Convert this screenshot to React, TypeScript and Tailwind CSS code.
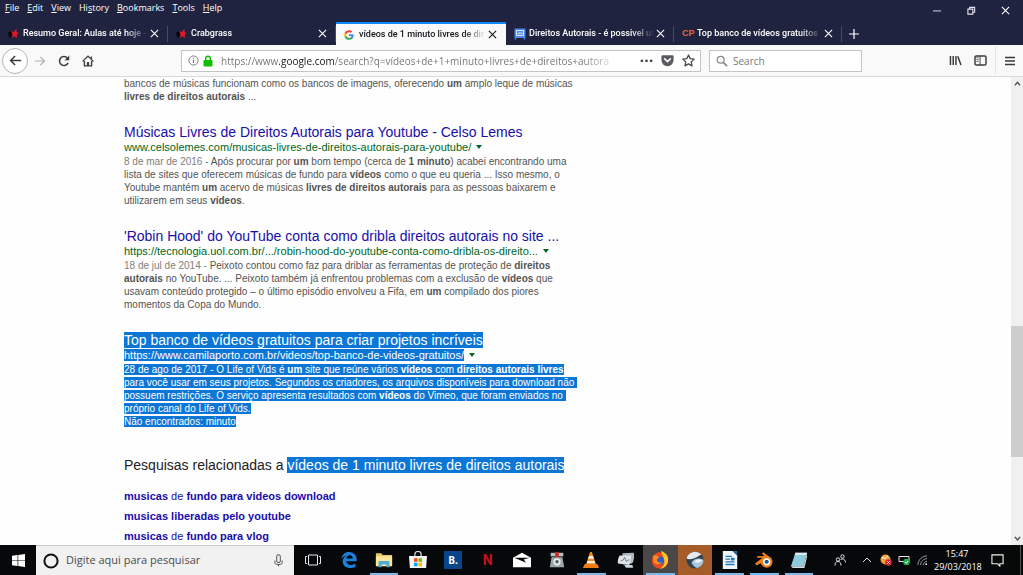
import type { ReactNode } from "react";

// ─── Data ───────────────────────────────────────────────────────────

const MENUS = ["File", "Edit", "View", "History", "Bookmarks", "Tools", "Help"];
// index of the underlined access key of each menu
const ACCESS_KEYS = [0, 0, 0, 2, 0, 0, 0];

const TABS = [
  { title: "Resumo Geral: Aulas até hoje -", icon: "crab", active: false },
  { title: "Crabgrass", icon: "crab", active: false },
  { title: "vídeos de 1 minuto livres de dir", icon: "google", active: true },
  { title: "Direitos Autorais - é possivel ut", icon: "board", active: false },
  { title: "Top banco de vídeos gratuitos", icon: "cp", active: false },
];

// ─── Small icons ────────────────────────────────────────────────────

function CloseIcon() {
  return (
    <svg viewBox="0 0 10 10" className="size-[9px]" fill="none" stroke="currentColor" strokeWidth="1.2">
      <path d="M1 1l8 8M9 1l-8 8" />
    </svg>
  );
}

function TabIcon({ name }: { name: string }) {
  if (name === "google") {
    return (
      <svg viewBox="0 0 24 24" className="size-[10px]">
        <path fill="#4285f4" d="M23 12.3c0-.8-.1-1.6-.2-2.3H12v4.5h6.200c-.3 1.500-1.100 2.700-2.300 3.500v3h3.700c2.200-2 3.400-5 3.400-8.700z" />
        <path fill="#34a853" d="M12 23.500c3.100 0 5.700-1 7.600-2.800l-3.700-2.900c-1 .7-2.300 1.100-3.900 1.100-3 0-5.500-2-6.400-4.700H1.800v3C3.700 21 7.500 23.500 12 23.500z" />
        <path fill="#fbbc05" d="M5.600 14.200c-.5-1.400-.5-3 0-4.400v-3H1.800c-1.600 3.200-1.600 7.100 0 10.300l3.800-2.900z" />
        <path fill="#ea4335" d="M12 5.100c1.700 0 3.200.6 4.400 1.700l3.300-3.300C17.700 1.600 15.100.5 12 .5 7.500.5 3.700 3 1.800 6.800l3.800 3C6.500 7.100 9 5.100 12 5.100z" />
      </svg>
    );
  }
  if (name === "board") {
    return (
      <svg viewBox="0 0 12 12" className="size-[12px]">
        <rect x=".5" y=".5" width="11" height="9.500" rx="1" fill="#4d8af0" />
        <path d="M1.500 10v1.500M10.500 10v1.500" stroke="#4d8af0" strokeWidth="1.400" />
        <path d="M2.500 2.500h7v5h-7z" fill="none" stroke="#dbe8ff" />
        <path d="M4 6l1.200-1.200 1 .8 1-1L8.500 6" stroke="#fff" fill="none" />
      </svg>
    );
  }
  if (name === "cp") {
    return <span className="font-['Liberation_Sans'] text-[9px] font-bold text-[#e2673a]">CP</span>;
  }
  return (
    <svg viewBox="0 0 12 12" className="size-[11px]">
      <path d="M0 5l4-2 1 3-2 5-2-2z" fill="#08080c" />
      <path d="M3.500 3l3 1.500L9 .5l.5 4 2 1-2 2 .5 3.500-3-2-2.500 1.500.5-3.500z" fill="#e0182a" />
    </svg>
  );
}

// ─── Title bar and tabs ─────────────────────────────────────────────

function TitleBar() {
  return (
    <div className="flex h-[22px] items-start justify-between pl-[5px] pr-[13px] text-white">
      <nav className="flex gap-2 text-[9px] leading-[15px]">
        {MENUS.map((menu, i) => (
          <button key={menu}>
            {menu.slice(0, ACCESS_KEYS[i])}
            <u>{menu[ACCESS_KEYS[i]]}</u>
            {menu.slice(ACCESS_KEYS[i] + 1)}
          </button>
        ))}
      </nav>
      <div className="flex h-[21px] items-center gap-[25px]">
        <button aria-label="Minimize">
          <svg viewBox="0 0 10 10" className="size-[9px]" stroke="#e4e4ee">
            <path d="M0 5.500h9" />
          </svg>
        </button>
        <button aria-label="Restore">
          <svg viewBox="0 0 10 10" className="size-[9px]" fill="none" stroke="#e4e4ee" strokeWidth="1.200">
            <path d="M1 3.500h5.500V9H1zM3 3.500V1.500h5.500V7h-2" />
          </svg>
        </button>
        <button aria-label="Close">
          <CloseIcon />
        </button>
      </div>
    </div>
  );
}

function TabStrip() {
  return (
    <div className="flex h-[23px] font-['Roboto','Open_Sans',sans-serif] text-[9px]">
      {TABS.map((tab) => (
        <div
          key={tab.title}
          className={
            tab.active
              ? "flex w-[170px] items-center border-t-2 border-[#0a84ff] bg-[#f9f9fa] pl-2 pr-[9px] text-[#15151a]"
              : "relative flex w-[168px] items-center pl-2 pr-[9px] text-white after:absolute after:right-0 after:h-4 after:w-px after:bg-[#4a4a68]"
          }
        >
          <span className="flex w-[15px] shrink-0 items-center">
            <TabIcon name={tab.icon} />
          </span>
          <span className="min-w-0 flex-1 overflow-hidden whitespace-nowrap font-medium [mask-image:linear-gradient(to_right,#000_82%,transparent)]">
            {tab.title}
          </span>
          <button aria-label="Close tab" className="ml-[2px]">
            <CloseIcon />
          </button>
        </div>
      ))}
      <button aria-label="New tab" className="px-[6px] text-white">
        <svg viewBox="0 0 12 12" className="size-[12px]" stroke="currentColor" strokeWidth="1.200">
          <path d="M6 1v10M1 6h10" />
        </svg>
      </button>
    </div>
  );
}

// ─── Toolbar ────────────────────────────────────────────────────────

function NavToolbar() {
  return (
    <div className="flex h-[32px] items-center border-b border-[#d9d9db] bg-[#f9f9fa] pl-[2px] pr-2 text-[#3b3b3e]">
      <button aria-label="Back" className="flex size-[26px] items-center justify-center rounded-full border border-[#b5b5b8] bg-white">
        <svg viewBox="0 0 16 16" className="size-[13px]" fill="none" stroke="currentColor" strokeWidth="1.800">
          <path d="M15 8H2M7.500 2.500L2 8l5.500 5.500" />
        </svg>
      </button>
      <button aria-label="Forward" className="ml-[6px] text-[#b1b1b3]">
        <svg viewBox="0 0 16 16" className="size-[12px]" fill="none" stroke="currentColor" strokeWidth="1.600">
          <path d="M1 8h13M8.500 2.500L14 8l-5.500 5.500" />
        </svg>
      </button>
      <button aria-label="Reload" className="ml-3">
        <svg viewBox="0 0 16 16" className="size-[12px]" fill="none" stroke="currentColor" strokeWidth="2">
          <path d="M13.500 10.500A6 6 0 1 1 12.500 4" />
          <path d="M15 .8v6.200H8.800z" fill="currentColor" stroke="none" />
        </svg>
      </button>
      <button aria-label="Home" className="ml-3">
        <svg viewBox="0 0 16 16" className="size-[12px]" fill="none" stroke="currentColor" strokeWidth="1.800">
          <path d="M.8 8.500L8 1.500l7.200 7M3.200 8v6.500h9.600V8M12.500 2v3" />
          <path d="M6.500 14.500v-5h3v5" fill="currentColor" stroke="none" />
        </svg>
      </button>

      <div className="ml-[87px] flex h-[22px] min-w-0 flex-1 items-center border border-[#c4c4c6] bg-white pl-[6px] pr-[5px]">
        <svg viewBox="0 0 12 12" className="size-[11px] shrink-0" fill="none" stroke="#737376">
          <circle cx="6" cy="6" r="5" />
          <path d="M6 5.200v3.500M6 3v1.200" strokeWidth="1.200" />
        </svg>
        <svg viewBox="0 0 10 12" className="ml-1 h-[12px] w-[10px] shrink-0">
          <rect x=".5" y="5" width="9" height="6.500" rx="1" fill="#12bc00" />
          <path d="M2.700 5.500V3.500a2.300 2.300 0 0 1 4.600 0v2" fill="none" stroke="#12bc00" strokeWidth="1.500" />
        </svg>
        <input
          aria-label="Address"
          defaultValue="https://www.google.com/search?q=vídeos+de+1+minuto+livres+de+direitos+autora"
          className="ml-2 min-w-0 flex-1 bg-clip-text bg-[linear-gradient(to_right,#707074_58px,#15151a_58px,#15151a_113px,#707074_113px,#707074_360px,transparent_400px)] text-[10px] leading-[16px] text-transparent outline-none"
        />
        <button aria-label="Page actions" className="ml-6">
          <svg viewBox="0 0 14 4" className="w-[13px]" fill="#4a4a4f">
            <circle cx="2" cy="2" r="1.500" />
            <circle cx="7" cy="2" r="1.500" />
            <circle cx="12" cy="2" r="1.500" />
          </svg>
        </button>
        <button aria-label="Save to Pocket" className="ml-2">
          <svg viewBox="0 0 16 16" className="size-[13px]">
            <path d="M2 1.500h12A1.500 1.500 0 0 1 15.500 3v4.500a7.500 7.500 0 0 1-15 0V3A1.500 1.500 0 0 1 2 1.500z" fill="#5b5b60" />
            <path d="M4.500 6L8 9.400 11.500 6" fill="none" stroke="#fff" strokeWidth="1.900" strokeLinecap="round" />
          </svg>
        </button>
        <button aria-label="Bookmark" className="ml-2">
          <svg viewBox="0 0 16 16" className="size-[13px]" fill="none" stroke="#4a4a4f" strokeWidth="1.600" strokeLinejoin="round">
            <path d="M8 1.200l2.100 4.500 4.900.6-3.600 3.400.9 4.900L8 12.200l-4.300 2.400.9-4.900L1 6.300l4.900-.6z" />
          </svg>
        </button>
      </div>

      <div className="ml-2 flex h-[22px] w-[153px] items-center border border-[#c4c4c6] bg-white pl-[6px]">
        <svg viewBox="0 0 14 14" className="size-[12px] shrink-0" fill="none" stroke="#8a8a8d" strokeWidth="1.500">
          <circle cx="5.500" cy="5.500" r="4" />
          <path d="M8.500 8.500l4.500 4.500" strokeWidth="2" />
        </svg>
        <input aria-label="Search" placeholder="Search" className="ml-[5px] min-w-0 flex-1 text-[10px] leading-[16px] outline-none placeholder:text-[#78787b]" />
      </div>

      <button aria-label="Library" className="ml-[87px]">
        <svg viewBox="0 0 14 12" className="h-[11px] w-[13px]" fill="none" stroke="currentColor" strokeWidth="1.600">
          <path d="M1.500 1v10M4.500 1v10M7.500 1v10M9.500 1.500l3.500 9.500" />
        </svg>
      </button>
      <button aria-label="Sidebars" className="ml-3">
        <svg viewBox="0 0 14 12" className="h-[11px] w-[13px]" fill="none" stroke="currentColor" strokeWidth="1.600">
          <rect x="1" y="1" width="12" height="10" rx="1.500" />
          <path d="M6.500 1v10" strokeWidth="1" />
          <path d="M2.500 3h2.500M2.500 5h2.500M2.500 7h2.500" strokeWidth=".8" />
        </svg>
      </button>
      <span className="ml-2 h-[29px] w-px bg-[#e4e4e6]" />
      <button aria-label="Open menu" className="ml-[9px]">
        <svg viewBox="0 0 10 10" className="size-[10px]" stroke="currentColor" strokeWidth="1.400">
          <path d="M0 1.500h10M0 5h10M0 8.500h10" />
        </svg>
      </button>
    </div>
  );
}

// ─── Search results ─────────────────────────────────────────────────

function Sel({ children }: { children: ReactNode }) {
  return <span className="bg-[#0b76d6] text-white">{children}</span>;
}

type ResultProps = { title: ReactNode; url: ReactNode; children: ReactNode };

function Result({ title, url, children }: ResultProps) {
  return (
    <article>
      <h3 className="text-[14px] leading-[16px]">
        <a href="#" className="text-[#1a0dab]">{title}</a>
      </h3>
      <div className="flex items-center gap-[5px] text-[11px] leading-[14px] text-[#006621]">
        <cite className="not-italic">{url}</cite>
        <svg viewBox="0 0 6 4" className="h-1 w-[6px]" fill="#006621">
          <path d="M0 0h6L3 4z" />
        </svg>
      </div>
      <p className="mt-px text-[10px] leading-[13px]">{children}</p>
    </article>
  );
}

function Results() {
  return (
    <main className="flex min-w-0 flex-1 flex-col overflow-hidden whitespace-pre pl-[124px] font-['Liberation_Sans',Arial,sans-serif] text-[#545454]">
      <div className="flex flex-col gap-[21px]">
        <p className="text-[10px] leading-[13px]">
          bancos de músicas funcionam como os bancos de imagens, oferecendo <b>um</b> amplo leque de músicas<br />
          <b>livres de direitos autorais</b> ...
        </p>
        <Result
          title="Músicas Livres de Direitos Autorais para Youtube - Celso Lemes"
          url="www.celsolemes.com/musicas-livres-de-direitos-autorais-para-youtube/"
        >
          <span className="text-[#808080]">8 de mar de 2016 - </span>
          Após procurar por <b>um</b> bom tempo (cerca de <b>1 minuto</b>) acabei encontrando uma<br />
          lista de sites que oferecem músicas de fundo para <b>vídeos</b> como o que eu queria ... Isso mesmo, o<br />
          Youtube mantém <b>um</b> acervo de músicas <b>livres de direitos autorais</b> para as pessoas baixarem e<br />
          utilizarem em seus <b>vídeos</b>.
        </Result>
        <Result
          title="'Robin Hood' do YouTube conta como dribla direitos autorais no site ..."
          url="https://tecnologia.uol.com.br/.../robin-hood-do-youtube-conta-como-dribla-os-direito..."
        >
          <span className="text-[#808080]">18 de jul de 2014 - </span>
          Peixoto contou como faz para driblar as ferramentas de proteção de <b>direitos</b><br />
          <b>autorais</b> no YouTube. ... Peixoto também já enfrentou problemas com a exclusão de <b>vídeos</b> que<br />
          usavam conteúdo protegido – o último episódio envolveu a Fifa, em <b>um</b> compilado dos piores<br />
          momentos da Copa do Mundo.
        </Result>
        <Result
          title={<Sel>Top banco de vídeos gratuitos para criar projetos incríveis</Sel>}
          url={<Sel>https://www.camilaporto.com.br/videos/top-banco-de-videos-gratuitos/</Sel>}
        >
          <Sel>
            28 de ago de 2017 - O Life of Vids é <b>um</b> site que reúne vários <b>vídeos</b> com <b>direitos autorais livres</b><br />
            para você usar em seus projetos. Segundos os criadores, os arquivos disponíveis para download não{" "}<br />
            possuem restrições. O serviço apresenta resultados com <b>vídeos</b> do Vimeo, que foram enviados no{" "}<br />
            próprio canal do Life of Vids.<br />
            Não encontrados: minuto
          </Sel>
        </Result>
      </div>

      <h2 className="mt-[29px] text-[14px] leading-[16px] text-[#222]">
        Pesquisas relacionadas a <Sel>vídeos de 1 minuto livres de direitos autorais</Sel>
      </h2>
      <ul className="mt-[13px] text-[11px] leading-[20px] text-[#1a0dab]">
        <li><a href="#"><b>musicas</b> de <b>fundo para videos download</b></a></li>
        <li><a href="#"><b>musicas liberadas pelo youtube</b></a></li>
        <li><a href="#"><b>musicas</b> de <b>fundo para vlog</b></a></li>
      </ul>
    </main>
  );
}

function Scrollbar() {
  return (
    <div className="flex w-[12px] shrink-0 flex-col items-center bg-[#f0f0f0]">
      <svg viewBox="0 0 8 6" className="my-1 w-[7px]" fill="none" stroke="#505050" strokeWidth="1.600">
        <path d="M1 5l3-3.500L7 5" />
      </svg>
      <div className="grow-[236]" />
      <div className="w-full grow-[131] bg-[#cdcdcd]" />
      <div className="grow-[75]" />
      <svg viewBox="0 0 8 6" className="my-1 w-[7px]" fill="none" stroke="#505050" strokeWidth="1.600">
        <path d="M1 1l3 3.500L7 1" />
      </svg>
    </div>
  );
}

// ─── Taskbar ────────────────────────────────────────────────────────

type App = { name: string; running?: boolean; bg?: string; art: ReactNode };

const APPS: App[] = [
  {
    name: "Edge",
    art: <path d="M1.500 9C2 4 5.500 1 10 1c5 0 8.500 3.500 8.500 8v2.500H7c.3 2.700 2.500 4 5 4 2 0 3.800-.6 5.200-1.500v3.800C15.500 18.700 13.500 19 11.500 19 6.500 19 3 16 3 11.500c0-3 1.800-5.300 4.500-6.500C4.500 5.300 2.500 7 1.500 9zm5.700-.8h6.900c0-2-1.200-3.400-3.300-3.400S7.500 6.300 7.200 8.200z" fill="#1c7fdc" />,
  },
  {
    name: "File Explorer",
    running: true,
    art: (
      <>
        <path d="M1 2.500h6l1.500 2H19v12H1z" fill="#e9c865" />
        <path d="M1 6h18v11H1z" fill="#fae69b" />
        <path d="M4 11h12v7h-3v-3H7v3H4z" fill="#4aa9d9" />
      </>
    ),
  },
  {
    name: "Store",
    art: (
      <>
        <path d="M6.500 6V3.500a3.500 3 0 0 1 7 0V6" fill="none" stroke="#d8d8d8" strokeWidth="1.400" />
        <path d="M0 5.500h20L19 19H1z" fill="#f6f6f6" />
        <path d="M5.500 8h4v4h-4z" fill="#f25022" />
        <path d="M10.500 8h4v4h-4z" fill="#7fba00" />
        <path d="M5.500 13h4v4h-4z" fill="#00a4ef" />
        <path d="M10.500 13h4v4h-4z" fill="#ffb900" />
      </>
    ),
  },
  { name: "Booking", art: null },
  { name: "Netflix", art: null },
  {
    name: "Mail",
    art: (
      <>
        <path d="M0 7.500L10 2l10 5.500V18H0z" fill="#fff" />
        <path d="M1.500 7.500h17L12 9.500l2.500 3.500z" fill="#0b0b0b" />
      </>
    ),
  },
  {
    name: "Recorder",
    art: (
      <>
        <path d="M3 2h14v4H3z" fill="#b9bec2" />
        <path d="M8 1h4v7H8z" fill="#c22a2a" />
        <path d="M4 7h12l2 11H2z" fill="#9fa8a6" />
        <circle cx="10" cy="12" r="4" fill="#e8eceb" />
        <circle cx="10" cy="12" r="2" fill="#50605c" />
      </>
    ),
  },
  {
    name: "VLC",
    running: true,
    art: (
      <>
        <path d="M9 1h2l4.500 14h-11z" fill="#f58a1f" />
        <path d="M7.700 5.500h4.600l1 3H6.700zM6 11h8l.8 2.500H5.200z" fill="#f3eee8" />
        <path d="M3 14.500h14l2 4.500H1z" fill="#ef7d14" />
      </>
    ),
  },
  {
    name: "Monitor",
    art: (
      <>
        <path d="M6 2.500l12.500-.5c1 3 .5 10-2 12L7 15z" fill="#aeb8bf" />
        <path d="M3 5h12.500c.5 4-.5 8-2 10.500L1 14c-.5-3 .5-7 2-9z" fill="#dfe5e8" />
        <path d="M4 11l3-1 1.500-3 2 5 1.500-2h2" fill="none" stroke="#5a7d94" />
        <path d="M8 15.500h9l1 3h-8z" fill="#cfd6da" />
      </>
    ),
  },
  {
    name: "Firefox",
    running: true,
    bg: "bg-[#4b4748]",
    art: (
      <>
        <circle cx="10" cy="10.500" r="9" fill="#f0481f" />
        <path d="M11 0c5 1.500 9 5.500 8 11S14 19.500 10 19.500c4-2 6-6 4.500-10C14 6 12 4 11 0z" fill="#ffc62b" />
        <circle cx="10" cy="10.500" r="4.500" fill="#2c5fc4" />
        <path d="M2 5.500c3-1.500 6-.5 7 2L6.500 9.500c0 3 3 4 5.500 3-1.500 3-6.500 3.500-9 0z" fill="#ff8a1c" />
      </>
    ),
  },
  {
    name: "Media",
    bg: "bg-[#a65c28]",
    art: (
      <>
        <circle cx="10" cy="10" r="9.500" fill="#33424f" />
        <path d="M1 7C3 1 12-2 17 4c-3 1-6 6-16 5z" fill="#e3e9ee" />
        <path d="M6 13c3-5 9-6 13.500-3 0 5-4 8-7 9-3-1-5-3-6.500-6z" fill="#a9c6dc" />
        <path d="M9 12c3-3 6-3 9-2-2 3-5 4-9 2z" fill="#eef4f8" />
      </>
    ),
  },
  {
    name: "Writer",
    running: true,
    art: (
      <>
        <path d="M2 0h11l5 5v15H2z" fill="#eef5fa" />
        <path d="M13 0h5v5z" fill="#1d6fa5" />
        <path d="M5 6h7M5 9h5M5 12h10M5 15h10" stroke="#1f78b4" strokeWidth="1.400" />
        <path d="M11 7.500h4v3h-4z" fill="#1f78b4" />
      </>
    ),
  },
  {
    name: "Blender",
    running: true,
    art: (
      <>
        <path d="M0 14L8.500 7.500H2.500V5.500h8L7.500 3 9.500 1.500l9 7-6 9-6.500-4-4 2.500z" fill="#ee7e1a" />
        <circle cx="13" cy="12" r="6.500" fill="#ee7e1a" />
        <circle cx="13" cy="12" r="4" fill="#fff" />
        <circle cx="13" cy="12" r="2.300" fill="#20558a" />
      </>
    ),
  },
  {
    name: "Notepad",
    running: true,
    art: (
      <>
        <path d="M6 2h13l-4 15H1z" fill="#8ecbdc" />
        <path d="M6 2h13l-.6 2.500H5.200z" fill="#dfe9ec" />
        <path d="M1 17h14l3.500-13 .5 2-3 13H3z" fill="#d9dedf" />
      </>
    ),
  },
];

function AppIcon({ app }: { app: App }) {
  if (app.name === "Booking") {
    return <span className="flex size-[18px] items-center justify-center bg-[#07458a] text-[10px] font-bold text-white">B.</span>;
  }
  if (app.name === "Netflix") {
    return <span className="font-['Roboto'] text-[14px] font-bold text-[#c8101a]">N</span>;
  }
  return <svg viewBox="0 0 20 20" className="size-[18px]">{app.art}</svg>;
}

function Taskbar() {
  return (
    <footer className="flex h-[30px] shrink-0 items-stretch bg-[#070809] text-white">
      <button aria-label="Start" className="flex w-[36px] items-center justify-center">
        <svg viewBox="0 0 14 14" className="size-[13px]" fill="#fff">
          <path d="M0 2l6-.9v5.500H0zM6.700 1L14 0v6.600H6.700zM0 7.300h6v5.500L0 12zM6.700 7.300H14V14l-7.300-1z" />
        </svg>
      </button>
      <label className="flex w-[258px] items-center border-t border-[#c9c9c9] bg-[#f1f1f1] pl-[7px] pr-[11px]">
        <svg viewBox="0 0 16 16" className="size-[16px] shrink-0" fill="none" stroke="#111" strokeWidth="2">
          <circle cx="8" cy="8" r="6.600" />
        </svg>
        <input
          aria-label="Digite aqui para pesquisar"
          placeholder="Digite aqui para pesquisar"
          className="ml-[7px] min-w-0 flex-1 text-[11px] outline-none placeholder:text-[#4c4c4c]"
        />
        <svg viewBox="0 0 10 14" className="h-[13px] w-[9px] shrink-0" fill="none" stroke="#444">
          <rect x="3" y=".7" width="4" height="8.500" rx="1.500" />
          <path d="M1 7v2.500c0 1 .8 1.800 2 1.800h4c1.200 0 2-.8 2-1.800V7M5 11.500V13.500" />
        </svg>
      </label>
      <button aria-label="Task view" className="flex w-[38px] items-center justify-center">
        <svg viewBox="0 0 16 12" className="h-[12px] w-[16px]" fill="none" stroke="#e8e8e8">
          <path d="M3.500 1h9v10h-9zM2 2.500H.5v7H2M14 2.500h1.500v7H14" />
        </svg>
      </button>
      <div className="flex w-[484px]">
        {APPS.map((app) => (
          <button
            key={app.name}
            aria-label={app.name}
            className={`relative flex flex-1 items-center justify-center ${app.bg ?? ""}`}
          >
            <AppIcon app={app} />
            {app.running && <span className="absolute inset-x-[3px] bottom-0 h-[2px] bg-[#76b9ed]" />}
          </button>
        ))}
      </div>
      <div className="ml-auto flex items-center">
        <svg viewBox="0 0 12 12" className="size-[12px]" fill="none" stroke="#e8e8e8">
          <circle cx="8.500" cy="2.500" r="1.700" />
          <circle cx="4" cy="5.500" r="1.700" />
          <path d="M1 11.500c0-2.500 1-4 3-4s3 1.500 3 4M6.500 6c1-1.600 4.800-1.600 5 2.500" />
        </svg>
        <svg viewBox="0 0 10 6" className="ml-4 w-[10px]" fill="none" stroke="#e8e8e8">
          <path d="M1 5l4-4 4 4" />
        </svg>
        <svg viewBox="0 0 12 12" className="ml-2 size-[12px]">
          <circle cx="5.500" cy="5.500" r="5" fill="#f0a03c" />
          <path d="M2 3.500l3 1 3-2.500" stroke="#fff" fill="none" />
          <circle cx="8.500" cy="8.500" r="3.300" fill="#d8262c" />
          <path d="M7.300 7.300l2.400 2.400M9.700 7.300L7.300 9.700" stroke="#fff" />
        </svg>
        <svg viewBox="0 0 13 12" className="ml-[6px] h-[12px] w-[13px]">
          <path d="M1 2.500h10v5H1z" fill="none" stroke="#e8e8e8" />
          <circle cx="8.500" cy="8" r="3.300" fill="#1fae4b" />
          <path d="M7 8l1.200 1.200L10 7" stroke="#fff" fill="none" />
        </svg>
        <svg viewBox="0 0 12 12" className="ml-[6px] size-[11px]" fill="none" stroke="#a8a8a8">
          <path d="M1 11C1 5.500 5.500 1 11 1M4 11c0-4 3-7 7-7M7 11c0-2.300 1.700-4 4-4" />
          <path d="M10 9v2" stroke="#fff" strokeWidth="1.500" />
        </svg>
        <time className="ml-[6px] w-[46px] whitespace-nowrap text-center text-[9px] leading-[13px]">
          15:47
          <br />
          29/03/2018
        </time>
        <svg viewBox="0 0 14 14" className="ml-[11px] size-[13px]" fill="none" stroke="#f0f0f0" strokeWidth="1.200">
          <path d="M1 1h12v9.500H9.500V13L7 10.500H1z" />
        </svg>
        <span className="ml-4 mr-[2px] h-[30px] w-px bg-[#55554f]" />
      </div>
    </footer>
  );
}

// ─── Page ───────────────────────────────────────────────────────────

export default function App() {
  return (
    <div className="flex h-screen flex-col overflow-hidden bg-[#fefefe] font-['Open_Sans','Noto_Sans',sans-serif]">
      <header className="shrink-0 bg-[#202340]">
        <TitleBar />
        <TabStrip />
        <NavToolbar />
      </header>
      <div className="flex min-h-0 flex-1">
        <Results />
        <Scrollbar />
      </div>
      <Taskbar />
    </div>
  );
}
